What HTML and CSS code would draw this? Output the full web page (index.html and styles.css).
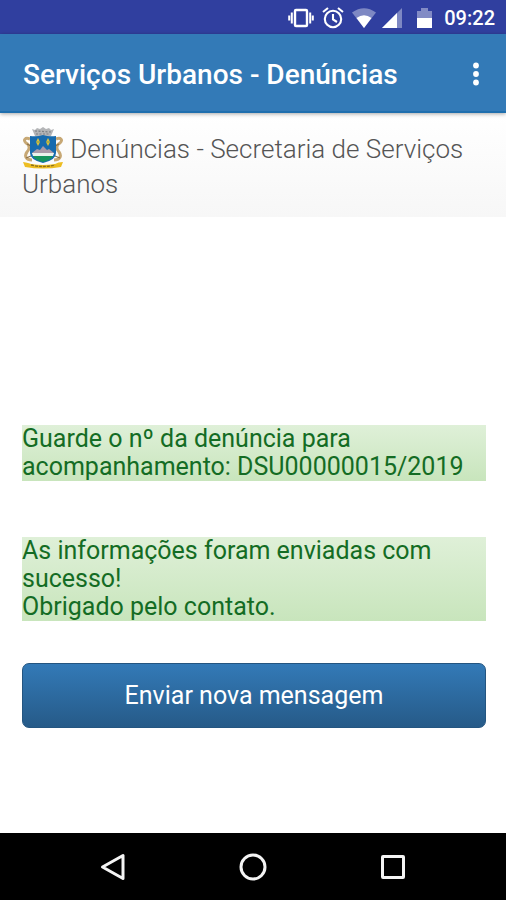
FILE: index.html
```html
<!DOCTYPE html>
<html lang="pt-BR">
<head>
<meta charset="utf-8">
<meta name="viewport" content="width=device-width, initial-scale=1">
<title>Serviços Urbanos - Denúncias</title>
<link rel="stylesheet" href="styles.css">
</head>
<body>
<div class="status-bar">
  <svg class="vibrate" width="26" height="20" viewBox="0 0 26 20" aria-hidden="true">
    <rect x="7" y="2" width="12" height="16" rx="1" fill="none" stroke="#fff" stroke-width="2.4"/>
    <path d="M3.800 4.500v11M22.200 4.500v11M1.200 7.500v5M24.800 7.500v5" stroke="#fff" stroke-width="2" fill="none"/>
  </svg>
  <svg class="alarm" width="22" height="22" viewBox="0 0 22 22" aria-hidden="true">
    <g fill="none" stroke="#fff" stroke-width="2.1"><circle cx="11" cy="12" r="8.200"/><path d="M1 5 6 1M21 5 16 1M11 7v5.500l4 2.500"/></g>
  </svg>
  <svg class="wifi" width="24" height="20" viewBox="0 0 24 20" aria-hidden="true">
    <path d="M0 4.500Q12-4 24 4.500L12 20z" fill="#fff" opacity=".38"/>
    <path d="M4.500 10Q12 4.500 19.500 10L12 20z" fill="#fff"/>
  </svg>
  <svg class="signal" width="20" height="20" viewBox="0 0 20 20" aria-hidden="true">
    <path d="M0 20 20 0v20z" fill="#fff" opacity=".38"/><path d="M0 20 15 5v15z" fill="#fff"/>
  </svg>
  <svg class="battery" width="15" height="20" viewBox="0 0 15 20" aria-hidden="true">
    <path d="M0 10V3h4V0h7v3h4v7z" fill="#fff" opacity=".4"/><path d="M0 10h15v10H0z" fill="#fff"/>
  </svg>
  <span class="clock">09:22</span>
</div>
<header class="app-bar">
  <h1>Serviços Urbanos - Denúncias</h1>
  <button type="button" class="more" aria-label="Mais opções">
    <svg width="6" height="24" viewBox="0 0 6 24" fill="#fff" aria-hidden="true"><circle cx="3" cy="3.500" r="2.900"/><circle cx="3" cy="12" r="2.900"/><circle cx="3" cy="20.500" r="2.900"/></svg>
  </button>
</header>
<section class="subheader">
  <h2><svg class="crest" width="42" height="42" viewBox="0 0 42 42" aria-hidden="true">
    <path d="M10 2l3 1 2-2 3 1 3-2 3 2 3-1 2 2 3-1-3 7H13z" fill="#b4b5b7"/>
    <path d="M13 4l16 1M14 7h14" stroke="#7c8086" stroke-width="1.200" stroke-dasharray="2 1.500"/>
    <g fill="none" stroke="#c7a875" stroke-width="3">
      <path d="M8 12c-5-2-7 1-4 4 4 2 4 6 1 9-3 4-1 8 5 8"/>
      <path d="M34 12c5-2 7 1 4 4-4 2-4 6-1 9 3 4 1 8-5 8"/>
    </g>
    <path d="M5 17l4 2M37 17l-4 2M4 31l5-2M38 31l-5-2" stroke="#8d7146" stroke-width="1.200"/>
    <path d="M8 9q7 1 13-1 6 2 13 1v17q0 7-13 10Q8 33 8 26z" fill="#176baf"/>
    <path d="M10 26l5-4 3 1 3-4 4 4 2-1 5 4v1H10z" fill="#aa9aa8"/>
    <path d="M10 26h22l-1 3H11z" fill="#eaf2ec"/>
    <path d="M11 29h20q-2 4-10 6-8-2-10-6z" fill="#16945d"/>
    <path d="M16 11l2 4-2 4-2-4zM26 11l2 4-2 4-2-4z" fill="#ddc33e"/>
    <path d="M14 15h4M24 15h4" stroke="#809a52" stroke-width="1"/>
    <path d="M1 35q6 1 8 2 12 2 24 0 3-2 8-2l-2 5q-18 3-36 0z" fill="#edbd22"/>
    <path d="M9 38q12 3 24 0" fill="none" stroke="#8b701c" stroke-width="1.300" stroke-dasharray="3 1"/>
  </svg> Denúncias - Secretaria de Serviços Urbanos</h2>
</section>
<main class="content">
  <p class="notice">Guarde o nº da denúncia para acompanhamento: DSU00000015/2019</p>
  <p class="notice">As informações foram enviadas com sucesso!<br>Obrigado pelo contato.</p>
  <button type="button" class="primary">Enviar nova mensagem</button>
</main>
<nav class="nav-bar" aria-label="Navegação do sistema">
  <button type="button" aria-label="Voltar"><svg width="28" height="28" viewBox="0 0 28 28"><path d="M24 2.500v23L3.500 14z"/></svg></button>
  <button type="button" aria-label="Início"><svg width="28" height="28" viewBox="0 0 28 28"><circle cx="14" cy="14" r="12"/></svg></button>
  <button type="button" aria-label="Recentes"><svg width="28" height="28" viewBox="0 0 28 28"><rect x="3.500" y="3.500" width="21" height="21" rx=".5"/></svg></button>
</nav>
</body>
</html>
```
FILE: styles.css
```css
* {
  box-sizing: border-box;
}

body {
  margin: 0;
  min-height: 100vh;
  display: flex;
  flex-direction: column;
  background: #fff;
  font-family: Roboto, sans-serif;
}

h1, h2, p {
  margin: 0;
}

button {
  font-family: inherit;
  cursor: pointer;
}

svg {
  flex: none;
}

.status-bar {
  height: 34px;
  padding: 2px 11px 0 0;
  display: flex;
  align-items: center;
  justify-content: flex-end;
  background: #303f9f;
  color: #fff;
}

.vibrate, .alarm {
  margin-right: 8px;
}

.wifi {
  margin-right: 6px;
}

.signal {
  margin-right: 15px;
}

.battery {
  margin-right: 12px;
}

.clock {
  font-size: 20px;
  font-weight: 500;
  line-height: 24px;
}

.app-bar {
  position: relative;
  height: 79px;
  padding: 2px 12px 0 23px;
  display: flex;
  align-items: center;
  justify-content: space-between;
  background: #337ab7;
  border-bottom: 2px solid #1f6fae;
  box-shadow: 0 1px 4px rgba(0, 0, 0, 0.35);
  color: #fff;
}

.app-bar h1 {
  padding-top: 2px;
  font-size: 28px;
  font-weight: 500;
  line-height: 32px;
}

.more {
  display: flex;
  justify-content: center;
  width: 36px;
  padding: 6px 0;
  border: 0;
  background: none;
}

.subheader {
  padding: 14px 22px 18px;
  background: linear-gradient(#fff, #f7f7f7);
}

.subheader h2 {
  color: #555;
  font-size: 26px;
  font-weight: 300;
  line-height: 30px;
}

.crest {
  vertical-align: -11px;
}

.content {
  flex: 1;
  padding: 208px 20px 24px 22px;
}

.notice {
  margin-bottom: 56px;
  background: linear-gradient(#dff0d8, #c8e5bc);
  color: #146c24;
  font-size: 25px;
  font-weight: 400;
  line-height: 28px;
}

.primary {
  display: block;
  width: 100%;
  height: 65px;
  margin-top: -14px;
  border: 1px solid #245580;
  border-radius: 7px;
  background: linear-gradient(#337ab7, #265a88);
  color: #fff;
  font-size: 25px;
}

.nav-bar {
  height: 67px;
  padding: 0 43px;
  display: grid;
  grid-template-columns: repeat(3, 1fr);
  background: #000;
}

.nav-bar button {
  display: flex;
  align-items: center;
  justify-content: center;
  border: 0;
  padding: 0;
  background: none;
}

.nav-bar svg {
  fill: none;
  stroke: #f4f4f4;
  stroke-width: 3;
  stroke-linejoin: round;
}
```
